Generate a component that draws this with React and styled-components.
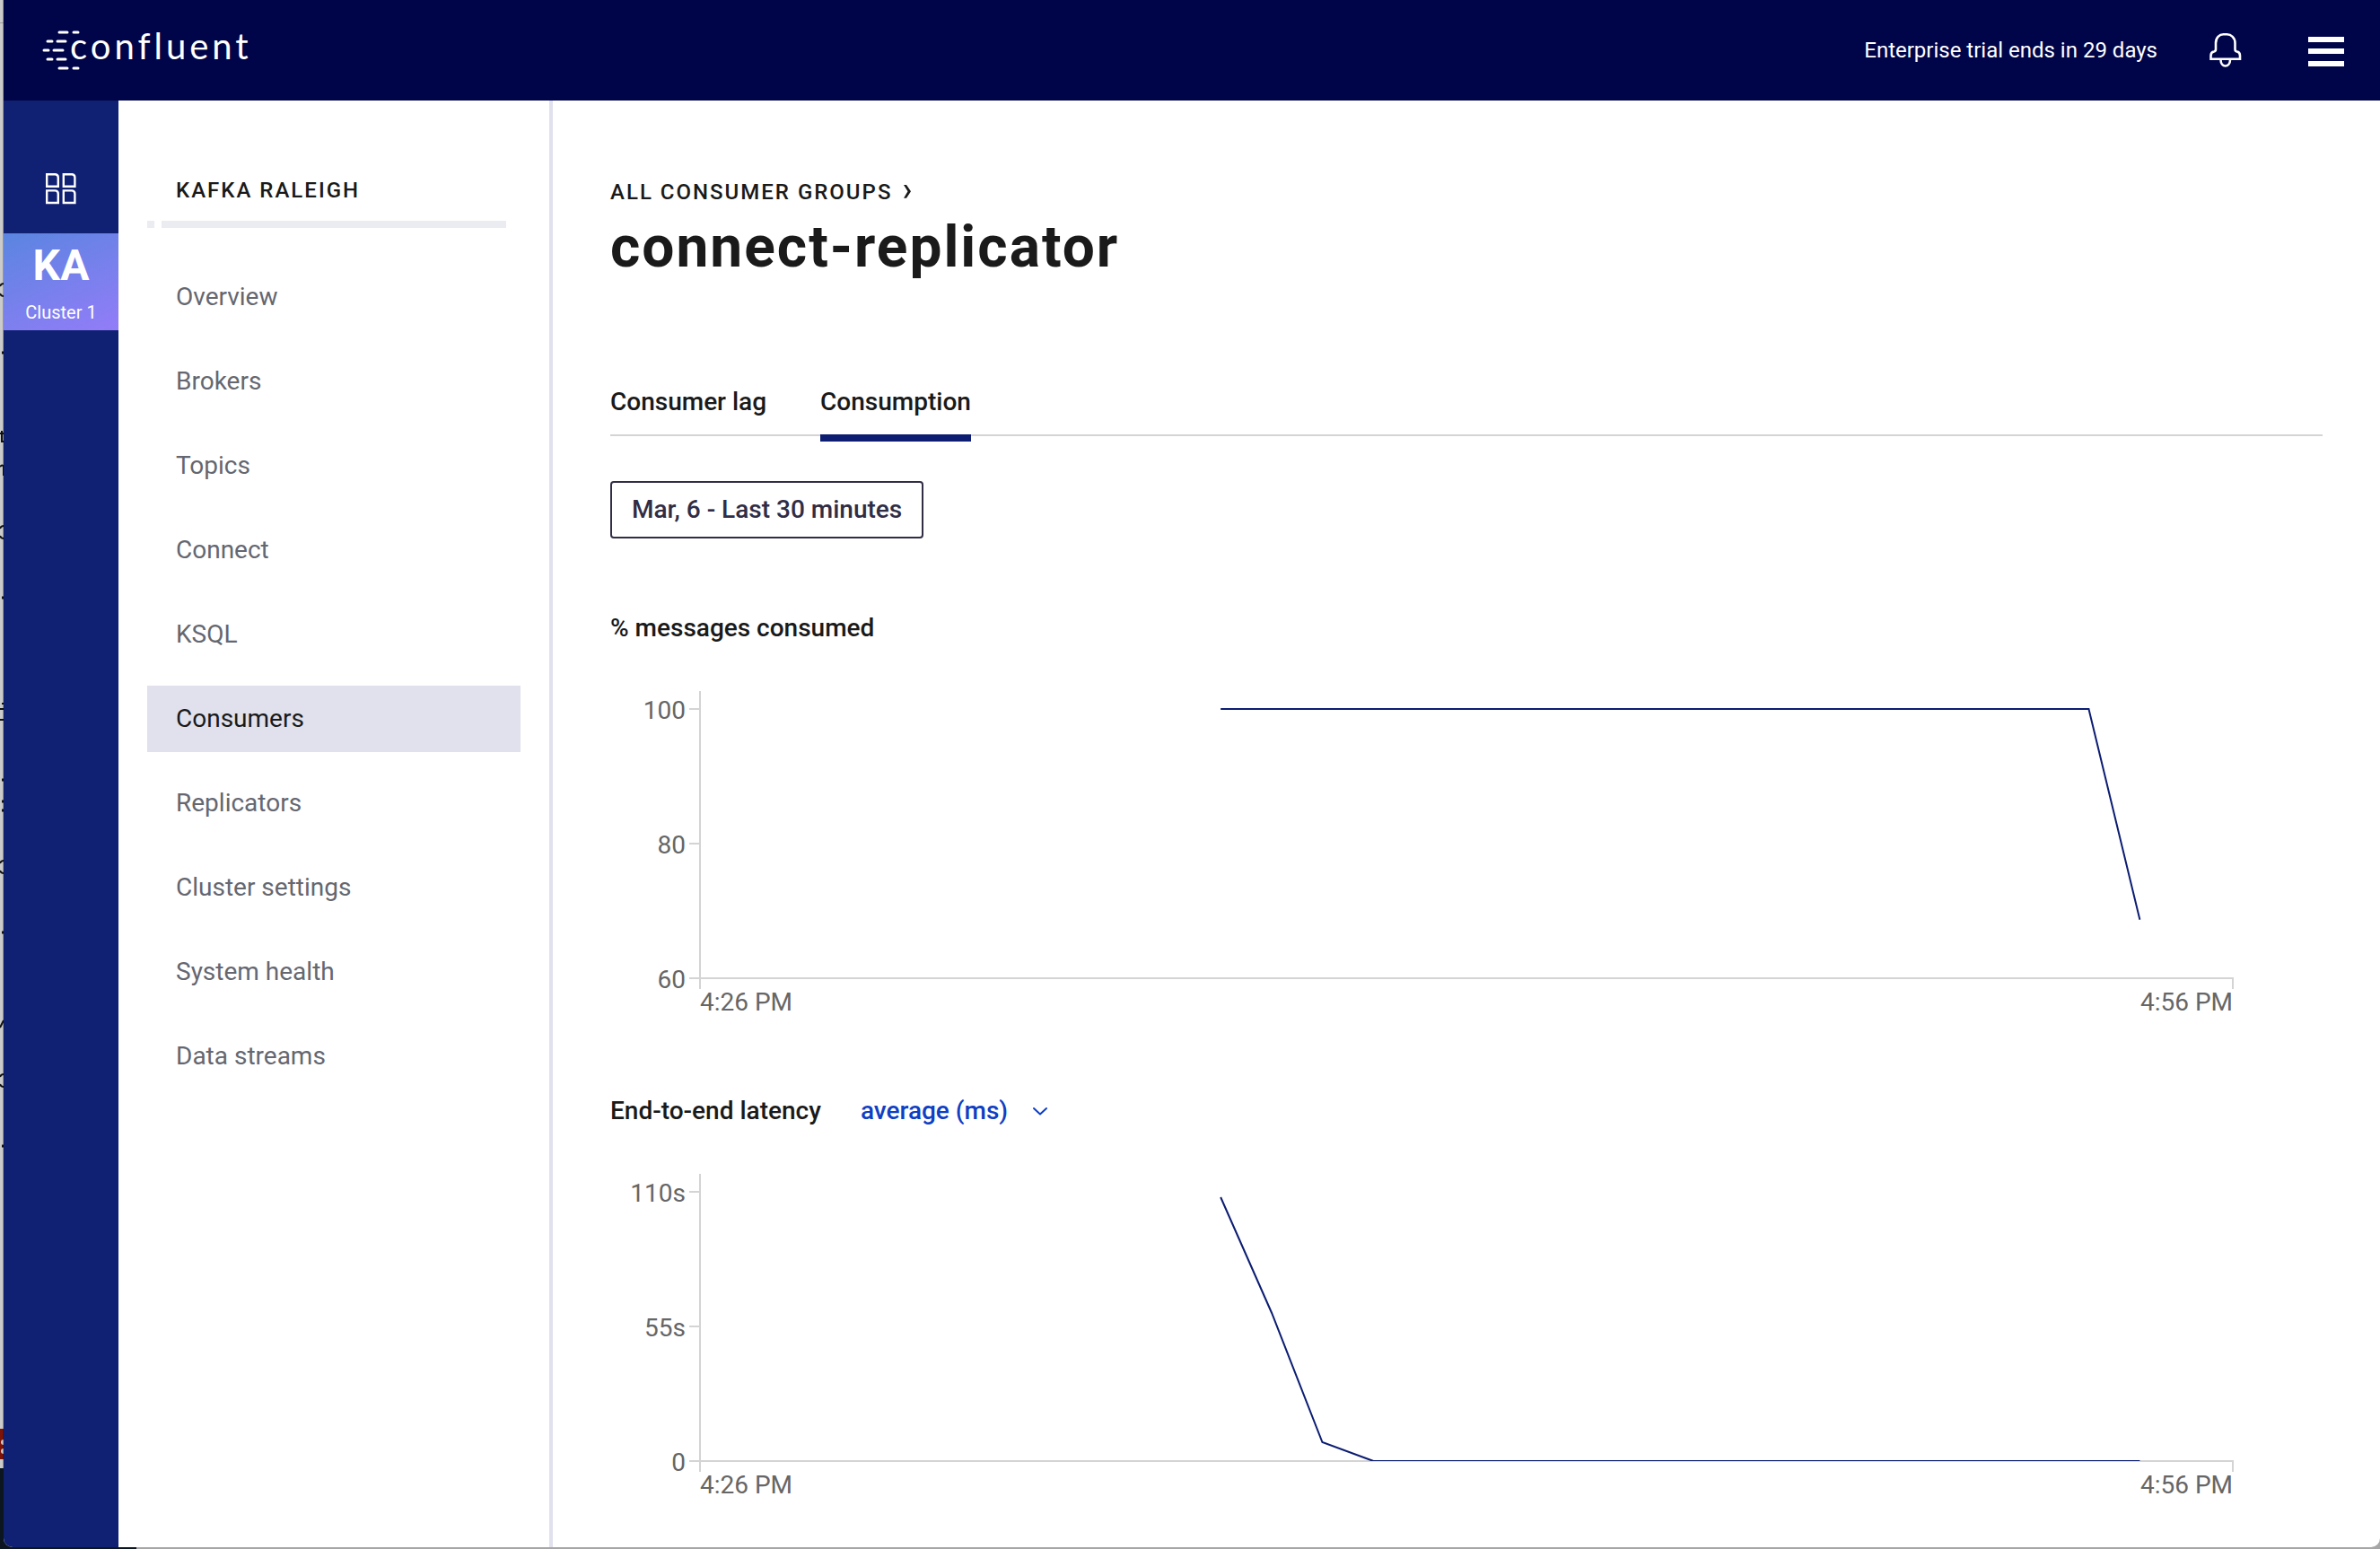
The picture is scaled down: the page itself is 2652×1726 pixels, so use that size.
import React from "react";
import styled, { createGlobalStyle, css } from "styled-components";

const color = {
  header: "#000448",
  rail: "#102072",
  navy: "#0c1d72",
  ink: "#1a1a1a",
  muted: "#656770",
  axis: "#d4d4d4",
  axisText: "#666666",
  divider: "#e0e1ed",
  mark: "#ebecf2",
  button: "#302d45",
  link: "#0f3fc4",
};

const GlobalStyle = createGlobalStyle`
  *, *::before, *::after { box-sizing: border-box; }
  body {
    margin: 0;
    font-family: Roboto, "Liberation Sans", sans-serif;
    color: ${color.ink};
    background: #ffffff;
  }
`;

const text = {
  small: css`
    font-size: 20px;
    line-height: 24px;
  `,
  label: css`
    font-size: 24px;
    line-height: 28px;
  `,
  body: css`
    font-size: 28px;
    line-height: 32px;
  `,
};

const Desktop = styled.div`
  display: flex;
  min-height: 100vh;
  padding-bottom: 2px;
  background: linear-gradient(to right, #0b1620 152px, #a6a6a6 152px);
`;

const EdgeDrawing = styled.svg`
  flex: none;
  align-self: stretch;
  width: 4px;
  background: #0b1620;
`;

const Window = styled.div`
  flex: 1;
  min-width: 0;
  display: flex;
  flex-direction: column;
  overflow: hidden;
  border-radius: 0 0 10px 10px;
  background: #ffffff;
`;

const Header = styled.header`
  display: flex;
  align-items: center;
  height: 112px;
  padding: 0 40px;
  background: ${color.header};
  color: #ffffff;
`;

const LogoLink = styled.a`
  display: flex;
  margin-right: auto;
  color: inherit;
`;

const LogoDrawing = styled.svg`
  overflow: visible;
`;

const LogoText = styled.text`
  font-family: Lato, sans-serif;
  font-size: 40px;
  letter-spacing: 4px;
  fill: currentColor;
`;

const TrialNote = styled.span`
  ${text.label}
  margin-right: 58px;
`;

const IconButton = styled.button`
  display: flex;
  padding: 0;
  border: 0;
  background: none;
  color: inherit;
  cursor: pointer;

  & + & {
    margin-left: 74px;
  }
`;

const Body = styled.div`
  flex: 1;
  display: flex;
`;

const Rail = styled.nav`
  flex: none;
  width: 128px;
  background: ${color.rail};
  color: #ffffff;
`;

const RailHome = styled.a`
  display: flex;
  justify-content: center;
  padding: 80px 0 32px;
  color: inherit;
`;

const ClusterTile = styled.a`
  display: flex;
  flex-direction: column;
  align-items: center;
  gap: 12px;
  padding: 8px 0;
  background: linear-gradient(155deg, #5a85e0, #937cf8);
  color: inherit;
  text-decoration: none;
`;

const ClusterInitials = styled.span`
  font-size: 48px;
  line-height: 56px;
  font-weight: 700;
`;

const ClusterName = styled.span`
  ${text.small}
`;

const Sidebar = styled.aside`
  flex: none;
  width: 484px;
  padding: 86px 32px 40px;
  border-right: 4px solid ${color.divider};
`;

const SidebarTitle = styled.h2`
  ${text.label}
  margin: 0 0 20px;
  padding-left: 32px;
  font-weight: 500;
  letter-spacing: 2px;
`;

const Mark = styled.div`
  display: flex;
  gap: 8px;
  margin: 0 16px 40px 0;
`;

const MarkPiece = styled.span`
  height: 8px;
  background: ${color.mark};
  ${({ $wide }) => ($wide ? "flex: 1;" : "width: 8px;")}
`;

const Menu = styled.ul`
  display: flex;
  flex-direction: column;
  gap: 20px;
  margin: 0;
  padding: 0;
  list-style: none;
`;

const MenuLink = styled.a`
  ${text.body}
  display: block;
  padding: 21px 32px;
  color: ${({ $active }) => ($active ? color.ink : color.muted)};
  background: ${({ $active }) => ($active ? color.divider : "transparent")};
  text-decoration: none;
`;

const Main = styled.main`
  flex: 1;
  min-width: 0;
  padding: 88px 64px 48px;
`;

const Breadcrumb = styled.a`
  ${text.label}
  display: inline-flex;
  align-items: center;
  gap: 12px;
  vertical-align: top;
  font-weight: 500;
  letter-spacing: 2px;
  color: ${color.ink};
  text-decoration: none;
`;

const Title = styled.h1`
  margin: 12px 0 120px;
  font-size: 64px;
  line-height: 72px;
  font-weight: 700;
  letter-spacing: 2px;
`;

const Tabs = styled.div`
  display: flex;
  gap: 60px;
  margin-bottom: 50px;
  border-bottom: 2px solid ${color.axis};
`;

const Tab = styled.button`
  ${text.body}
  margin: 0 0 -8px;
  padding: 0 0 20px;
  border: 0;
  border-bottom: 8px solid ${({ $active }) => ($active ? color.navy : "transparent")};
  background: none;
  color: ${color.ink};
  font-family: inherit;
  font-weight: 500;
  cursor: pointer;
`;

const RangeButton = styled.button`
  ${text.body}
  padding: 14px 22px;
  border: 2px solid ${color.button};
  border-radius: 4px;
  background: #ffffff;
  color: ${color.button};
  font-family: inherit;
  font-weight: 500;
  cursor: pointer;
`;

const Sections = styled.div`
  display: flex;
  flex-direction: column;
  align-items: stretch;
  gap: 84px;
  margin-top: 84px;
`;

const SectionHead = styled.div`
  display: flex;
  align-items: center;
  gap: 44px;
  margin-bottom: 54px;
`;

const SectionTitle = styled.h3`
  ${text.body}
  margin: 0;
  font-weight: 500;
`;

const SelectBox = styled.label`
  display: inline-flex;
  align-items: center;
  gap: 26px;
  color: ${color.link};
`;

const Select = styled.select`
  ${text.body}
  height: 32px;
  padding: 0;
  border: 0;
  appearance: none;
  background: none;
  color: inherit;
  font-family: inherit;
  font-weight: 500;
  cursor: pointer;
`;

const ChartFrame = styled.div`
  padding: 0 100px;
`;

const ChartSvg = styled.svg`
  display: block;
  width: 100%;
  height: 368px;
  overflow: visible;
`;

const AxisLine = styled.line`
  stroke: ${color.axis};
  stroke-width: 2px;
`;

const AxisText = styled.text`
  font-size: 28px;
  fill: ${color.axisText};
`;

const Series = styled.polyline`
  fill: none;
  stroke: ${color.navy};
  stroke-width: 2px;
  vector-effect: non-scaling-stroke;
`;

const PLOT = { top: 20, bottom: 320, minutes: 30 };

const scaleY = (value, [min, max]) =>
  PLOT.bottom - ((value - min) / (max - min)) * (PLOT.bottom - PLOT.top);

function Chart({ label, domain, ticks, points }) {
  const line = points.map(([m, v]) => `${m},${scaleY(v, domain)}`).join(" ");
  return (
    <ChartFrame>
      <ChartSvg role="img" aria-label={label}>
        <AxisLine x1="0" x2="0" y1="0" y2="332" />
        <AxisLine x1="0" x2="100%" y1={PLOT.bottom} y2={PLOT.bottom} />
        <AxisLine x1="100%" x2="100%" y1="319" y2="332" />
        {ticks.map(([value, name]) => {
          const y = scaleY(value, domain);
          return (
            <g key={name}>
              <AxisLine x1="-12" x2="0" y1={y} y2={y} />
              <AxisText x="-16" y={y + 11} textAnchor="end">{name}</AxisText>
            </g>
          );
        })}
        <AxisText x="0" y="356">4:26 PM</AxisText>
        <AxisText x="100%" y="356" textAnchor="end">4:56 PM</AxisText>
        <svg width="100%" height={PLOT.bottom} viewBox={`0 0 ${PLOT.minutes} ${PLOT.bottom}`} preserveAspectRatio="none">
          <Series points={line} />
        </svg>
      </ChartSvg>
    </ChartFrame>
  );
}

function Logo() {
  const dashes = [
    [22, 31, 5], [38, 43, 5], [9, 14, 15], [20, 29, 15], [5, 10, 25],
    [16, 26, 25], [9, 14, 35], [20, 29, 35], [22, 31, 45], [38, 43, 45],
  ];
  return (
    <LogoDrawing width="240" height="50" viewBox="0 0 240 50" role="img" aria-label="confluent">
      <g stroke="currentColor" strokeWidth="3" strokeLinecap="round">
        {dashes.map(([x1, x2, y]) => (
          <line key={`${x1}-${y}`} x1={x1} x2={x2} y1={y} y2={y} />
        ))}
      </g>
      <LogoText x="34" y="35">confluent</LogoText>
    </LogoDrawing>
  );
}

const BellIcon = () => (
  <svg width="36" height="38" viewBox="0 0 36 38" fill="none" stroke="currentColor" strokeWidth="2.6" aria-hidden="true">
    <path d="M1.5 28.7V25c0-2.700 1.500-4.200 3.500-4.500 1.500-.3 2-1 2-2.500v-7C7 5 11 1.300 15.500 1.300h4C24 1.300 28.500 5 28.500 11v7c0 1.500.5 2.200 2 2.500 2 .3 3.500 1.800 3.500 4.500v3.700z" />
    <path d="M12.500 29.500c0 4.500 2.500 7 5.200 7s5.300-2.500 5.300-7" />
  </svg>
);

const MenuIcon = () => (
  <svg width="40" height="36" viewBox="0 0 40 36" fill="currentColor" aria-hidden="true">
    <rect y="3" width="40" height="6" />
    <rect y="16" width="40" height="6" />
    <rect y="30" width="40" height="6" />
  </svg>
);

const GridIcon = () => (
  <svg width="36" height="36" viewBox="0 0 36 36" fill="none" stroke="currentColor" strokeWidth="2.4" aria-hidden="true">
    {[[2.2, 2.2], [20.8, 2.2], [2.2, 20.4], [20.8, 20.4]].map(([x, y]) => (
      <path key={`${x}-${y}`} d={`M${x} ${y}h9.600q3 .4 3 3.500v10.100h-12.600z`} />
    ))}
  </svg>
);

const ChevronDown = () => (
  <svg width="18" height="12" viewBox="0 0 18 12" fill="none" stroke="currentColor" strokeWidth="2" strokeLinecap="round" strokeLinejoin="round" aria-hidden="true">
    <path d="M2 3l7 6.500L16 3" />
  </svg>
);

const ChevronRight = () => (
  <svg width="10" height="16" viewBox="0 0 10 16" fill="currentColor" aria-hidden="true">
    <path d="M1 0h3l5 7.300-5 7.400H1l4.500-7.400z" />
  </svg>
);

/* Sliver of the windows that lie behind the application window. */
const BackdropEdge = () => (
  <EdgeDrawing aria-hidden="true">
    <rect width="4" height="1636" fill="#cbcbcb" />
    <rect y="25" width="4" height="1" fill="#9c9c9c" />
    <g fill="none" stroke="#111111" strokeWidth="2">
      {[323, 593, 966, 1204].map((y) => (
        <path key={y} d={`M4 ${y - 7}Q1 ${y - 7} 0 ${y - 4}M4 ${y + 7}Q1 ${y + 7} 0 ${y + 4}`} />
      ))}
      {[393, 666, 869, 893, 903, 1039, 1277].map((y) => (
        <path key={y} d={`M2 ${y}h2`} strokeWidth="3" />
      ))}
      <path d="M0 483h4M2 480v12h2M0 520q3-3 4 0v10M0 790h4M0 802h4M3 783v2M0 1145l4-8" />
    </g>
    <rect y="1592" width="4" height="34" fill="#7d1409" />
    <circle cx="4" cy="1607" r="3" fill="#cbcbcb" />
    <circle cx="4" cy="1617" r="3" fill="#cbcbcb" />
    <rect x="3" width="1" height="1636" fill="#000000" opacity="0.25" />
  </EdgeDrawing>
);

const menu = [
  "Overview", "Brokers", "Topics", "Connect", "KSQL", "Consumers",
  "Replicators", "Cluster settings", "System health", "Data streams",
];

const consumed = {
  label: "% messages consumed",
  domain: [60, 100],
  ticks: [[100, "100"], [80, "80"], [60, "60"]],
  points: [[10.19, 100], [27.18, 100], [28.18, 68.7]],
};

const latency = {
  label: "End-to-end latency",
  domain: [0, 110],
  ticks: [[110, "110s"], [55, "55s"], [0, "0"]],
  points: [[10.19, 107.8], [11.19, 60.5], [12.18, 7.7], [13.18, 0], [28.18, 0]],
};

export default function App() {
  return (
    <>
      <GlobalStyle />
      <Desktop>
        <BackdropEdge />
        <Window>
          <Header>
            <LogoLink href="#"><Logo /></LogoLink>
            <TrialNote>Enterprise trial ends in 29 days</TrialNote>
            <IconButton type="button" aria-label="Notifications"><BellIcon /></IconButton>
            <IconButton type="button" aria-label="Menu"><MenuIcon /></IconButton>
          </Header>
          <Body>
            <Rail aria-label="Clusters">
              <RailHome href="#" aria-label="Home"><GridIcon /></RailHome>
              <ClusterTile href="#">
                <ClusterInitials>KA</ClusterInitials>
                <ClusterName>Cluster 1</ClusterName>
              </ClusterTile>
            </Rail>
            <Sidebar>
              <SidebarTitle>KAFKA RALEIGH</SidebarTitle>
              <Mark>
                <MarkPiece />
                <MarkPiece $wide />
              </Mark>
              <nav aria-label="Kafka Raleigh">
                <Menu>
                  {menu.map((name) => {
                    const active = name === "Consumers";
                    return (
                      <li key={name}>
                        <MenuLink href="#" $active={active} aria-current={active ? "page" : undefined}>
                          {name}
                        </MenuLink>
                      </li>
                    );
                  })}
                </Menu>
              </nav>
            </Sidebar>
            <Main>
              <Breadcrumb href="#">ALL CONSUMER GROUPS<ChevronRight /></Breadcrumb>
              <Title>connect-replicator</Title>
              <Tabs role="tablist">
                <Tab type="button" role="tab" aria-selected="false">Consumer lag</Tab>
                <Tab type="button" role="tab" aria-selected="true" $active>Consumption</Tab>
              </Tabs>
              <RangeButton type="button">Mar, 6 - Last 30 minutes</RangeButton>
              <Sections>
                <section>
                  <SectionHead>
                    <SectionTitle>% messages consumed</SectionTitle>
                  </SectionHead>
                  <Chart {...consumed} />
                </section>
                <section>
                  <SectionHead>
                    <SectionTitle>End-to-end latency</SectionTitle>
                    <SelectBox>
                      <Select aria-label="Latency statistic">
                        <option>average (ms)</option>
                      </Select>
                      <ChevronDown />
                    </SelectBox>
                  </SectionHead>
                  <Chart {...latency} />
                </section>
              </Sections>
            </Main>
          </Body>
        </Window>
      </Desktop>
    </>
  );
}
